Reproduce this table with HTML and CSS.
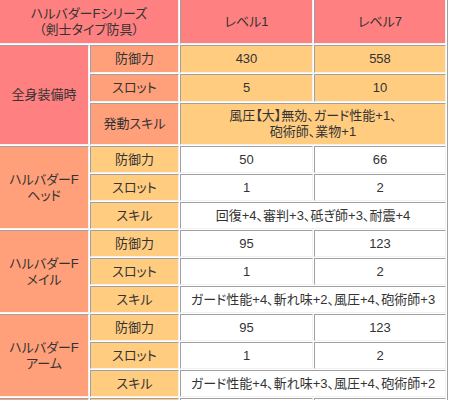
FILE: index.html
```html
<!DOCTYPE html>
<html lang="ja">
<head>
<meta charset="utf-8">
<title>ハルバダーFシリーズ</title>
<link rel="stylesheet" href="styles.css">
</head>
<body>
<table class="armor">
  <colgroup>
    <col class="c1"><col class="c2"><col class="c3"><col class="c4">
  </colgroup>
  <tr class="r-head">
    <th colspan="2" class="pink">ハルバダーFシリーズ<br>（剣士タイプ防具）</th>
    <th class="pink">レベル1</th>
    <th class="pink">レベル7</th>
  </tr>
  <tr class="r-full">
    <td rowspan="3" class="pink">全身装備時</td>
    <td class="salmon">防御力</td>
    <td class="orange">430</td>
    <td class="orange">558</td>
  </tr>
  <tr class="r-full">
    <td class="salmon">スロット</td>
    <td class="orange">5</td>
    <td class="orange">10</td>
  </tr>
  <tr class="r-tall">
    <td class="salmon">発動スキル</td>
    <td colspan="2" class="orange">風圧【大】無効、ガード性能+1、<br>砲術師、業物+1</td>
  </tr>

  <tr class="r-part">
    <td rowspan="3" class="salmon">ハルバダーF<br>ヘッド</td>
    <td class="orange">防御力</td>
    <td class="white">50</td>
    <td class="white">66</td>
  </tr>
  <tr class="r-part">
    <td class="orange">スロット</td>
    <td class="white">1</td>
    <td class="white">2</td>
  </tr>
  <tr class="r-part">
    <td class="orange">スキル</td>
    <td colspan="2" class="white">回復+4、審判+3、砥ぎ師+3、耐震+4</td>
  </tr>

  <tr class="r-part">
    <td rowspan="3" class="salmon">ハルバダーF<br>メイル</td>
    <td class="orange">防御力</td>
    <td class="white">95</td>
    <td class="white">123</td>
  </tr>
  <tr class="r-part">
    <td class="orange">スロット</td>
    <td class="white">1</td>
    <td class="white">2</td>
  </tr>
  <tr class="r-part">
    <td class="orange">スキル</td>
    <td colspan="2" class="white">ガード性能+4、斬れ味+2、風圧+4、砲術師+3</td>
  </tr>

  <tr class="r-part">
    <td rowspan="3" class="salmon">ハルバダーF<br>アーム</td>
    <td class="orange">防御力</td>
    <td class="white">95</td>
    <td class="white">123</td>
  </tr>
  <tr class="r-part">
    <td class="orange">スロット</td>
    <td class="white">1</td>
    <td class="white">2</td>
  </tr>
  <tr class="r-part">
    <td class="orange">スキル</td>
    <td colspan="2" class="white">ガード性能+4、斬れ味+3、風圧+4、砲術師+2</td>
  </tr>

  <tr class="r-part">
    <td class="salmon"></td>
    <td class="orange"></td>
    <td class="white"></td>
    <td class="white"></td>
  </tr>
</table>
</body>
</html>
```

FILE: styles.css
```css
html, body {
  margin: 0;
  padding: 0;
  background: #ffffff;
  overflow: hidden;
}

.armor {
  margin: -3px 0 0 -3px;
  width: 451px;
  table-layout: fixed;
  border-collapse: separate;
  border-spacing: 1px;
  border: 1px solid;
  border-color: #f0f0f0 #a0a0a0 #a0a0a0 #f0f0f0;
  background: #ffffff;
  font-family: "Liberation Sans", "Noto Sans CJK JP", sans-serif;
  font-size: 13px;
  line-height: 16px;
  font-feature-settings: "palt";
  color: #333333;
}

.c1 { width: 90px; }
.c2 { width: 89px; }
.c3 { width: 133px; }
.c4 { width: 132px; }

.armor th,
.armor td {
  box-sizing: border-box;
  padding: 0;
  font-weight: normal;
  text-align: center;
  vertical-align: middle;
  white-space: nowrap;
  border: 1px solid;
  border-color: #a0a0a0 #f2f2f2 #f2f2f2 #a0a0a0;
}

.r-head > * { height: 45px; }
.r-full > * { height: 28px; }
.r-tall > * { height: 42px; }
.r-part > * { height: 27px; }

.pink { background: #ff8080; }
.salmon { background: #ffa07a; }
.orange { background: #ffcc80; }
.white { background: #ffffff; }
```
